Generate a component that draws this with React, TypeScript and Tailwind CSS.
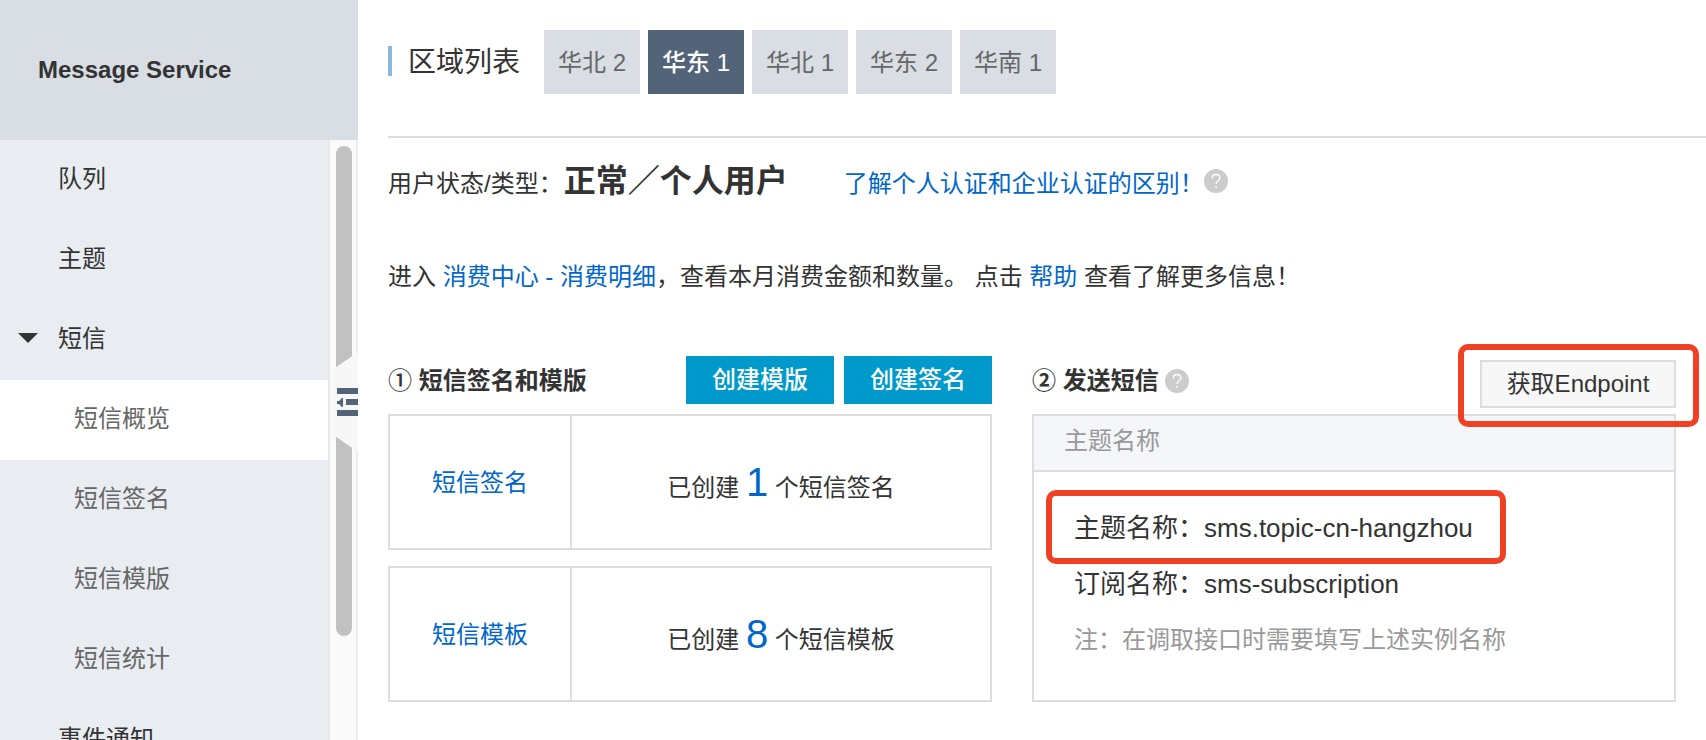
import { useState } from "react";

const regions = ["华北 2", "华东 1", "华北 1", "华东 2", "华南 1"];

const navItems = [
  { label: "队列", sub: false },
  { label: "主题", sub: false },
  { label: "短信", sub: false, open: true },
  { label: "短信概览", sub: true },
  { label: "短信签名", sub: true },
  { label: "短信模版", sub: true },
  { label: "短信统计", sub: true },
  { label: "事件通知", sub: false },
];

const cards = [
  { name: "短信签名", count: 1 },
  { name: "短信模板", count: 8 },
];

function HelpIcon() {
  return (
    <svg viewBox="0 0 24 24" className="size-6 shrink-0" role="img" aria-label="帮助">
      <circle cx="12" cy="12" r="12" fill="#cccccc" />
      <path
        d="M8.2 9.2C8.3 6.8 9.9 5.5 12.1 5.5c2.2 0 3.8 1.3 3.8 3.3 0 1.5-.8 2.3-2 3.2-1.2.9-1.8 1.5-1.8 3.1"
        fill="none"
        stroke="#fff"
        strokeWidth="1.3"
      />
      <circle cx="12.1" cy="18" r="0.9" fill="#fff" />
    </svg>
  );
}

function Sidebar() {
  return (
    <aside className="flex w-[358px] shrink-0 flex-col">
      <div className="flex h-[140px] shrink-0 items-center bg-[#d9dde4] pl-[38px]">
        <h1 className="text-2xl font-bold">Message Service</h1>
      </div>
      <div className="relative flex min-h-0 flex-1">
        <nav className="min-w-0 flex-1 overflow-hidden bg-[#e9edf1]">
          {navItems.map((item) => (
            <a
              key={item.label}
              href="#"
              className={`flex h-20 items-center pb-0.5 text-2xl ${
                item.sub ? "pl-[74px] text-[#666]" : "text-[#333]"
              } ${item.label === "短信概览" ? "bg-white" : ""}`}
            >
              {!item.sub && (
                <span className="flex w-[58px] pb-0.5 pl-[18px]">
                  {item.open && (
                    <svg viewBox="0 0 20 10" className="h-2.5 w-5" aria-hidden="true">
                      <path d="M0 0h20L10 10z" fill="#333" />
                    </svg>
                  )}
                </span>
              )}
              {item.label}
            </a>
          ))}
        </nav>
        <div className="w-[30px] border-x-2 border-[#e8e8e8] border-r-[#ededed] bg-[#fafafa] px-1.5 pt-1.5">
          <div className="h-[490px] w-4 rounded-full bg-[#c1c1c1]" />
        </div>
        <button
          type="button"
          aria-label="收起菜单"
          className="absolute top-[212px] right-0 h-[100px] w-[26px]"
        >
          <svg viewBox="0 0 26 100" className="h-full w-full" aria-hidden="true">
            <path d="M26 0L0 18v64l26 18z" fill="#f7f7f7" />
            <path d="M5 36h21v6H5zM14 47h12v6H14zM5 58h21v6H5zM5 49h2l3-3h1v9h-1l-3-3H5z" fill="#546478" />
          </svg>
        </button>
      </div>
    </aside>
  );
}

export default function App() {
  const [region, setRegion] = useState("华东 1");

  return (
    <div className="flex h-screen overflow-hidden bg-white font-['Liberation_Sans','Noto_Sans_CJK_SC',sans-serif] text-2xl text-[#333]">
      <Sidebar />
      <main className="min-w-0 flex-1 pl-[30px]">
        <header className="flex items-center border-b-2 border-[#ddd] pt-[30px] pb-[42px]">
          <span className="mb-0.5 h-[30px] w-1 bg-[#8ab8e0]" />
          <h2 className="ml-4 pt-0.5 text-[28px] leading-10">区域列表</h2>
          <div className="ml-6 flex gap-2">
            {regions.map((name) => (
              <button
                key={name}
                type="button"
                onClick={() => setRegion(name)}
                className={`h-16 w-24 pt-0.5 whitespace-nowrap ${
                  name === region
                    ? "bg-[#546478] font-medium text-white"
                    : "bg-[#d9dde4] text-[#666]"
                }`}
              >
                {name}
              </button>
            ))}
          </div>
        </header>

        <div className="flex h-[84px] items-center pt-0.5 whitespace-nowrap">
          <p className="flex items-baseline">
            用户状态/类型：
            <strong className="ml-px text-[32px] leading-10 font-bold">正常／个人用户</strong>
            <a href="#" className="ml-14 text-[#06c]">
              了解个人认证和企业认证的区别！
            </a>
          </p>
          <HelpIcon />
        </div>

        <p className="flex h-[110px] items-center whitespace-pre">
          进入 <a href="#" className="text-[#06c]">消费中心 - 消费明细</a>，查看本月消费金额和数量。 点击{" "}
          <a href="#" className="text-[#06c]">帮助</a> 查看了解更多信息！
        </p>

        <div className="grid grid-cols-[604fr_644fr] gap-10 pt-6 pr-[30px]">
          <section>
            <div className="flex h-[58px] items-start justify-between">
              <h3 className="pt-px leading-12 font-bold">
                <span className="font-medium">①</span> 短信签名和模版
              </h3>
              <div className="flex gap-2.5">
                <button type="button" className="h-12 w-[148px] bg-[#0099cc] font-medium text-white">
                  创建模版
                </button>
                <button type="button" className="h-12 w-[148px] bg-[#0099cc] font-medium text-white">
                  创建签名
                </button>
              </div>
            </div>
            <div className="flex flex-col gap-4">
              {cards.map((card) => (
                <div key={card.name} className="flex h-[136px] border-2 border-[#ddd]">
                  <div className="flex w-[182px] items-center justify-center border-r-2 border-[#ddd] pt-0.5">
                    <a href="#" className="text-[#06c]">
                      {card.name}
                    </a>
                  </div>
                  <p className="flex-1 text-center leading-[132px]">
                    已创建 <span className="text-[40px] text-[#06c]">{card.count}</span> 个{card.name}
                  </p>
                </div>
              ))}
            </div>
          </section>

          <section className="flex flex-col">
            <div className="flex h-[58px] items-start justify-between">
              <h3 className="flex items-center gap-1.5 pt-px leading-12 font-bold">
                <span>② 发送短信</span>
                <HelpIcon />
              </h3>
              <div className="relative mt-1">
                <button
                  type="button"
                  className="h-12 w-[196px] border-2 border-[#ddd] bg-[#f7f7f7] whitespace-nowrap"
                >
                  获取Endpoint
                </button>
                <span className="pointer-events-none absolute -top-4 -right-[23px] -bottom-[19px] -left-[22px] rounded-[10px] border-6 border-[#f04124]" />
              </div>
            </div>
            <div className="flex-1 border-2 border-[#ddd]">
              <div className="h-14 border-b-2 border-[#ddd] bg-[#f5f6fa] pl-[30px] leading-[50px] text-[#999]">
                主题名称
              </div>
              <div className="pt-7 pl-10 leading-14">
                <p className="text-[26px] leading-14">
                  <span className="relative inline-block">
                    主题名称：sms.topic-cn-hangzhou
                    <span className="pointer-events-none absolute -top-2.5 -right-[33px] -bottom-2 -left-7 rounded-[10px] border-6 border-[#f04124]" />
                  </span>
                </p>
                <p className="text-[26px] leading-14">订阅名称：sms-subscription</p>
                <p className="text-[#999]">注：在调取接口时需要填写上述实例名称</p>
              </div>
            </div>
          </section>
        </div>
      </main>
    </div>
  );
}
